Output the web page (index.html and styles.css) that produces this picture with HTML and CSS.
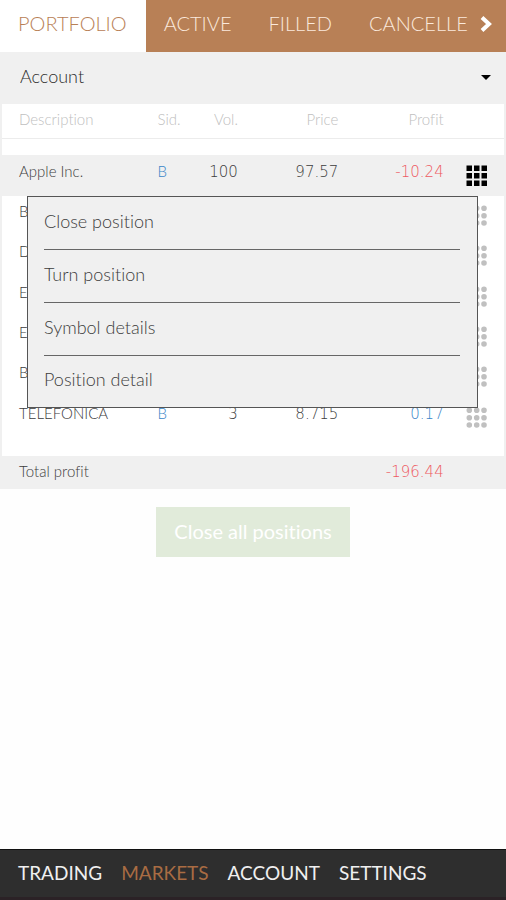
FILE: index.html
```
<!DOCTYPE html>
<html lang="en">
<head>
    <meta charset="UTF-8">
    <meta name="viewport" content="width=device-width, initial-scale=1.0">
    <title>Portfolio</title>
    <link rel="stylesheet" href="styles.css">
</head>
<body>
    <svg class="sprite" aria-hidden="true">
        <symbol id="squares" viewBox="0 0 22 22">
            <path d="M.5.5h5.500v5.500H.5zM8 .5h5.500v5.500H8zM15.500.5H21v5.500h-5.500zM.5 8h5.500v5.500H.5zM8 8h5.500v5.500H8zM15.500 8H21v5.500h-5.500zM.5 15.500h5.500V21H.5zM8 15.500h5.500V21H8zM15.500 15.500H21V21h-5.500z" fill="currentColor"/>
        </symbol>
        <symbol id="dots" viewBox="0 0 22 22">
            <path d="M3.300 3.300h.01M10.700 3.300h.01M18 3.300h.01M3.300 10.700h.01M10.700 10.700h.01M18 10.700h.01M3.300 18h.01M10.700 18h.01M18 18h.01" stroke="currentColor" stroke-width="5.600" stroke-linecap="round"/>
        </symbol>
    </svg>

    <nav class="tabs">
        <div class="tab-list">
            <a href="#" class="tab active">PORTFOLIO</a>
            <a href="#" class="tab">ACTIVE</a>
            <a href="#" class="tab">FILLED</a>
            <a href="#" class="tab">CANCELLE</a>
        </div>
        <button class="next" aria-label="More tabs">
            <svg width="12" height="18" viewBox="0 0 12 18"><path d="M2 2.500l7 6.500l-7 6.500" fill="none" stroke="#fff" stroke-width="4"/></svg>
        </button>
    </nav>

    <div class="account">
        <select class="account-select" aria-label="Account">
            <option>Account</option>
        </select>
        <svg class="caret" width="10" height="5" viewBox="0 0 10 5"><path d="M0 0h10L5 5z"/></svg>
    </div>

    <main>
        <div class="positions">
            <table>
                <colgroup>
                    <col class="col-name"><col class="col-side"><col class="col-vol"><col class="col-price"><col class="col-profit"><col class="col-menu">
                </colgroup>
                <thead>
                    <tr><th>Description</th><th>Sid.</th><th class="head-num">Vol.</th><th class="head-num">Price</th><th class="head-num">Profit</th><th></th></tr>
                </thead>
                <tbody>
                    <tr class="selected">
                        <td>Apple Inc.</td><td class="up">B</td><td class="num">100</td><td class="num">97.57</td><td class="num down">-10.24</td>
                        <td class="menu-cell"><button class="row-menu" aria-label="Apple Inc. menu"><svg width="22" height="22"><use href="#squares"/></svg></button></td>
                    </tr>
                    <tr>
                        <td>B</td><td></td><td></td><td></td><td></td>
                        <td class="menu-cell"><button class="row-menu" aria-label="Position menu"><svg width="22" height="22"><use href="#dots"/></svg></button></td>
                    </tr>
                    <tr>
                        <td>D</td><td></td><td></td><td></td><td></td>
                        <td class="menu-cell"><button class="row-menu" aria-label="Position menu"><svg width="22" height="22"><use href="#dots"/></svg></button></td>
                    </tr>
                    <tr>
                        <td>E</td><td></td><td></td><td></td><td></td>
                        <td class="menu-cell"><button class="row-menu" aria-label="Position menu"><svg width="22" height="22"><use href="#dots"/></svg></button></td>
                    </tr>
                    <tr>
                        <td>E</td><td></td><td></td><td></td><td></td>
                        <td class="menu-cell"><button class="row-menu" aria-label="Position menu"><svg width="22" height="22"><use href="#dots"/></svg></button></td>
                    </tr>
                    <tr>
                        <td>B</td><td></td><td></td><td></td><td></td>
                        <td class="menu-cell"><button class="row-menu" aria-label="Position menu"><svg width="22" height="22"><use href="#dots"/></svg></button></td>
                    </tr>
                    <tr>
                        <td>TELEFONICA</td><td class="up">B</td><td class="num">3</td><td class="num">8.715</td><td class="num up">0.17</td>
                        <td class="menu-cell"><button class="row-menu" aria-label="TELEFONICA menu"><svg width="22" height="22"><use href="#dots"/></svg></button></td>
                    </tr>
                </tbody>
                <tfoot>
                    <tr><td colspan="3">Total profit</td><td colspan="2" class="num down">-196.44</td><td></td></tr>
                </tfoot>
            </table>

            <div class="popup">
                <button class="popup-item">Close position</button>
                <button class="popup-item">Turn position</button>
                <button class="popup-item">Symbol details</button>
                <button class="popup-item">Position detail</button>
            </div>
        </div>

        <button class="close-all">Close all positions</button>
    </main>

    <nav class="bottom-bar">
        <a href="#">TRADING</a>
        <a href="#" class="active">MARKETS</a>
        <a href="#">ACCOUNT</a>
        <a href="#">SETTINGS</a>
    </nav>
</body>
</html>
```
FILE: styles.css
```
* {
    box-sizing: border-box;
}
body {
    margin: 0;
    min-height: 100vh;
    display: flex;
    flex-direction: column;
    background: #fefefe;
    color: #3c3c3c;
    font-family: Lato, "Open Sans", sans-serif;
    font-size: 15px;
    font-weight: 300;
    font-variant-ligatures: none;
}
a {
    text-decoration: none;
}
button {
    font: inherit;
    font-variant-ligatures: none;
    color: inherit;
    background: none;
    border: none;
    padding: 0;
    cursor: pointer;
}
svg {
    display: block;
}
.sprite {
    position: absolute;
    width: 0;
    height: 0;
}

/* top tabs */
.tabs {
    display: flex;
    height: 52px;
    background: #b88056;
}
.tab-list {
    display: flex;
    flex: 1;
}
.tab {
    padding: 0 19px 4px 18px;
    font-size: 20px;
    line-height: 46px;
    color: #fbe9dc;
}
.tab:last-child {
    padding-right: 0;
}
.tab.active {
    background: #fff;
    color: #b88056;
}
.next {
    width: 34px;
    padding: 0 0 4px 8px;
}

/* account drop-down */
.account {
    display: flex;
    align-items: center;
    height: 51px;
    padding: 0 15px 0 20px;
    background: #f0f0f0;
}
.account-select {
    flex: 1;
    appearance: none;
    border: none;
    padding: 0 0 3px;
    background: none;
    color: #2c2c2c;
    font: inherit;
    font-size: 18px;
}
.caret {
    pointer-events: none;
}

/* positions */
main {
    flex: 1;
}
.positions {
    position: relative;
    border: 2px solid #f0f0f0;
    border-width: 1px 2px 0;
    background: #fff;
}
table {
    width: 100%;
    table-layout: fixed;
    border-spacing: 0;
}
.col-name { width: 31%; }
.col-side { width: 7%; }
.col-vol { width: 9%; }
.col-price { width: 20%; }
.col-profit { width: 21%; }
th, td {
    padding: 0 0 10px;
    line-height: 20px;
    text-align: left;
    font-weight: inherit;
}
th:first-child,
td:first-child {
    padding-left: 17px;
}
th {
    height: 35px;
    padding-bottom: 4px;
    border-bottom: 1px solid #ececec;
    color: #c0c0c0;
}
tbody::before {
    content: "";
    display: block;
    height: 16px;
}
tbody::after {
    content: "";
    display: block;
    height: 18px;
}
tbody td {
    height: 40px;
}
tbody tr:nth-child(3n + 1) td {
    height: 41px;
}
.head-num,
.num {
    text-align: right;
}
.num {
    padding-bottom: 8px;
    font-family: "DejaVu Sans Light", "DejaVu Sans", sans-serif;
    font-weight: 200;
}
.selected td,
tfoot td {
    background: #f0f0f0;
}
tfoot td {
    height: 33px;
    padding-bottom: 4px;
}
tfoot .num {
    padding-bottom: 2px;
}
.up { color: #3a85c8; }
.down { color: #ee5a62; }
.menu-cell {
    padding: 0;
}
.row-menu {
    display: block;
    padding-left: 22px;
    color: #c0c0c0;
}
.selected .row-menu {
    color: #000;
}

/* row popup */
.popup {
    position: absolute;
    top: 92px;
    left: 25px;
    right: 26px;
    padding: 0 17px 0 16px;
    background: #f0f0f0;
    border: 1px solid #555;
}
.popup-item {
    display: block;
    width: 100%;
    height: 53px;
    padding-bottom: 5px;
    border-bottom: 1px solid #666;
    font-size: 18px;
    text-align: left;
}
.popup-item:last-child {
    height: 51px;
    border-bottom: none;
}

.close-all {
    display: block;
    height: 50px;
    margin: 18px auto 0;
    padding: 0 18px 2px;
    background: #e1ebda;
    color: #fff;
    font-size: 20px;
    font-weight: 400;
}

/* bottom navigation */
.bottom-bar {
    display: flex;
    gap: 19px;
    height: 51px;
    padding: 0 18px;
    background: #2e2e2e;
    border-top: 1px solid #111;
    border-bottom: 3px solid #2b2226;
    line-height: 46px;
    font-size: 19px;
    font-weight: 400;
}
.bottom-bar a {
    color: #f0f0f0;
}
.bottom-bar .active {
    color: #a96c43;
}
```
